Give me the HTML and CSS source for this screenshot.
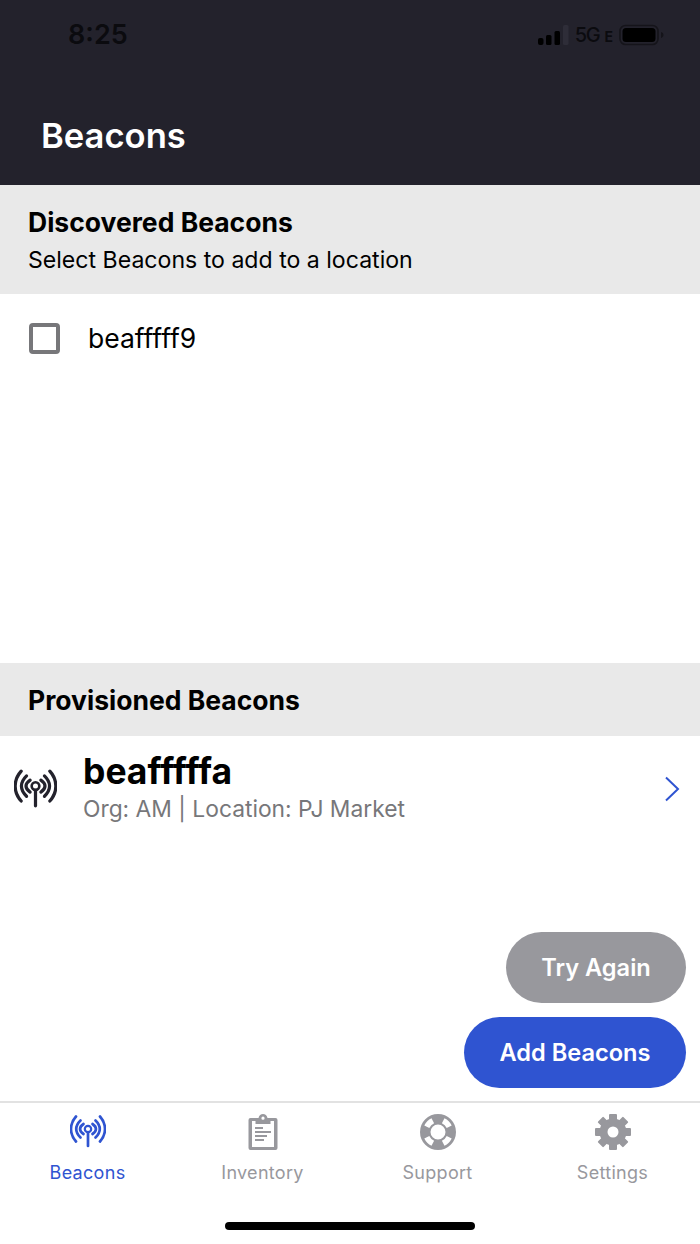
FILE: index.html
```html
<!DOCTYPE html>
<html lang="en">
<head>
<meta charset="utf-8">
<title>Beacons</title>
<link rel="stylesheet" href="styles.css">
</head>
<body>
<div class="screen">
  <header class="header">
    <div class="status">
      <span class="time">8:25</span>
      <div class="status-icons">
        <svg class="signal" width="31" height="20" viewBox="0 0 31 20"><rect x="0" y="13" width="5.500" height="7" rx="2" fill="#000"/><rect x="8" y="10" width="5.500" height="10" rx="1.500" fill="#000"/><rect x="16.500" y="6" width="5.500" height="14" rx="1.500" fill="#000"/><rect x="25" y="0" width="5.500" height="20" rx="1.500" fill="#2e2d38"/></svg>
        <span class="net">5G<span class="net-e">E</span></span>
        <svg class="battery" width="46" height="22" viewBox="0 0 46 22"><rect x="1" y="1.500" width="38" height="19" rx="5.500" fill="none" stroke="#15141a" stroke-width="1.600"/><rect x="3.500" y="4" width="33" height="14" rx="3.500" fill="#000"/><path d="M42 8c1.600.4 2.500 1.600 2.500 3s-.9 2.600-2.500 3z" fill="#15141a"/></svg>
      </div>
    </div>
    <h1 class="title">Beacons</h1>
  </header>

  <section class="band band-discovered">
    <h2 class="band-title">Discovered Beacons</h2>
    <p class="band-sub">Select Beacons to add to a location</p>
  </section>
  <div class="discovered">
    <div class="check-row">
      <span class="checkbox"></span>
      <span class="check-label">beafffff9</span>
    </div>
  </div>

  <section class="band band-provisioned">
    <h2 class="band-title">Provisioned Beacons</h2>
  </section>
  <div class="provisioned">
    <div class="beacon-row">
      <svg class="beacon-icon" width="43" height="39" viewBox="0 1 36 32"><g fill="none" stroke="#23222c" stroke-width="2.700" stroke-linecap="round"><path d="M6 2.500C-.7 10 -.7 20 6 27.500"/><path d="M30 2.500C36.700 10 36.700 20 30 27.500"/><path d="M10.500 6.500C4.800 12 4.800 18 10.500 23.500"/><path d="M25.500 6.500C31.200 12 31.200 18 25.500 23.500"/><path d="M13.500 10C8.900 13 8.900 17 13.500 20"/><path d="M22.500 10C27.100 13 27.100 17 22.500 20"/><circle cx="18" cy="15" r="3.200" stroke-width="2.200"/><path d="M18 18.500V31.500"/></g></svg>
      <div class="beacon-text">
        <div class="beacon-name">beafffffa</div>
        <div class="beacon-meta">Org: AM | Location: PJ Market</div>
      </div>
      <svg class="chevron" width="16" height="26" viewBox="0 0 16 26"><path d="M2 1.500 14 13 2 24.500" fill="none" stroke="#2f54d1" stroke-width="2"/></svg>
    </div>
    <div class="actions">
      <button class="btn btn-gray">Try Again</button>
      <button class="btn btn-blue">Add Beacons</button>
    </div>
  </div>

  <nav class="tabs">
    <div class="tab tab-active">
      <svg class="tab-icon" width="36" height="36" viewBox="0 0 36 36"><g fill="none" stroke="currentColor" stroke-width="2.700" stroke-linecap="round"><path d="M6 2.500C-.7 10 -.7 20 6 27.500"/><path d="M30 2.500C36.700 10 36.700 20 30 27.500"/><path d="M10.500 6.500C4.800 12 4.800 18 10.500 23.500"/><path d="M25.500 6.500C31.200 12 31.200 18 25.500 23.500"/><path d="M13.500 10C8.900 13 8.900 17 13.500 20"/><path d="M22.500 10C27.100 13 27.100 17 22.500 20"/><circle cx="18" cy="15" r="3.200" stroke-width="2.200"/><path d="M18 18.500V32"/></g></svg>
      <span>Beacons</span>
    </div>
    <div class="tab">
      <svg class="tab-icon" width="36" height="36" viewBox="0 0 36 36"><path fill="currentColor" fill-rule="evenodd" d="M5.500 4h8C14 1.500 15.800 0 18 0s4 1.500 4.500 4h8a2 2 0 0 1 2 2v28a2 2 0 0 1-2 2h-25a2 2 0 0 1-2-2V6a2 2 0 0 1 2-2zm1.500 3v26h22V7h-3.500v3h-15V7zM18 2.600a1.600 1.600 0 1 0 0 3.200 1.600 1.600 0 0 0 0-3.200z"/><g fill="currentColor"><rect x="10" y="13" width="8" height="2"/><rect x="10" y="17" width="16" height="2"/><rect x="10" y="21" width="12" height="2"/><rect x="10" y="25" width="9" height="2"/></g></svg>
      <span>Inventory</span>
    </div>
    <div class="tab">
      <svg class="tab-icon" width="36" height="36" viewBox="0 0 36 36"><path fill="currentColor" fill-rule="evenodd" d="M18 0a18 18 0 1 1 0 36 18 18 0 0 1 0-36zm0 10.500a7.500 7.500 0 1 0 0 15 7.500 7.500 0 0 0 0-15zM11.500 4.300a15.200 15.200 0 0 0-7.200 7.200l5 2.600a10 10 0 0 1 4.800-4.800zm13 0-2.600 5a10 10 0 0 1 4.800 4.800l5-2.600a15.200 15.200 0 0 0-7.200-7.200zM4.300 24.500a15.200 15.200 0 0 0 7.200 7.200l2.600-5a10 10 0 0 1-4.800-4.800zm27.400 0-5-2.600a10 10 0 0 1-4.800 4.800l2.600 5a15.200 15.200 0 0 0 7.200-7.200z"/></svg>
      <span>Support</span>
    </div>
    <div class="tab">
      <svg class="tab-icon" width="36" height="36" viewBox="0 0 36 36"><g fill="currentColor"><circle cx="18" cy="18" r="13.500"/><rect x="14" y="0" width="8" height="36" rx="1"/><rect x="14" y="0" width="8" height="36" rx="1" transform="rotate(45 18 18)"/><rect x="14" y="0" width="8" height="36" rx="1" transform="rotate(90 18 18)"/><rect x="14" y="0" width="8" height="36" rx="1" transform="rotate(135 18 18)"/></g><circle cx="18" cy="18" r="5.500" fill="#fff"/></svg>
      <span>Settings</span>
    </div>
  </nav>
  <div class="home-area"><div class="home-bar"></div></div>
</div>
</body>
</html>
```
FILE: styles.css
```css
* { box-sizing: border-box; }
html, body { margin: 0; padding: 0; }
body { background: #fff; font-family: Inter, "Noto Sans", sans-serif; color: #000; }
.screen { width: 700px; height: 1244px; display: flex; flex-direction: column; overflow: hidden; }

.header { height: 185px; background: #23222c; padding: 0 0 0 41px; display: flex; flex-direction: column; }
.status { height: 68px; display: flex; align-items: center; justify-content: space-between; padding: 2px 35px 0 27px; }
.time { font-size: 27px; font-weight: 600; color: #0b0b0f; line-height: 34px; }
.status-icons { display: flex; align-items: center; gap: 6px; }
.net { font-size: 20px; font-weight: 500; color: #0b0b0f; line-height: 24px; letter-spacing: -1.300px; display: flex; align-items: flex-end; }
.net-e { font-size: 14px; font-weight: 700; margin-left: 5px; line-height: 21px; letter-spacing: 0; }
.title { margin: 47px 0 0; font-size: 34.600px; line-height: 40px; font-weight: 600; color: #fff; }

.band { background: #e9e9e9; padding-left: 28px; }
.band-discovered { height: 109px; padding-top: 21px; }
.band-provisioned { height: 73px; padding-top: 21px; }
.band-title { margin: 0; font-size: 26.500px; line-height: 32px; font-weight: 700; }
.band-sub { margin: 6px 0 0; font-size: 23.100px; line-height: 32px; }

.discovered { height: 369px; padding: 29px 0 0 29px; }
.check-row { display: flex; align-items: center; gap: 28px; }
.checkbox { width: 31px; height: 31px; border: 4px solid #77777a; border-radius: 4px; }
.check-label { font-size: 26.500px; line-height: 31px; }

.provisioned { height: 365px; display: flex; flex-direction: column; }
.beacon-row { display: flex; align-items: center; padding: 12px 20px 0 14px; height: 88px; }
.beacon-icon { flex: none; margin-top: 5px; }
.beacon-text { flex: 1; margin-left: 26px; }
.beacon-name { font-size: 35.500px; line-height: 44px; font-weight: 700; }
.beacon-meta { font-size: 22.800px; line-height: 29px; color: #77777a; }
.chevron { flex: none; margin-top: 6px; }
.actions { display: flex; flex-direction: column; align-items: flex-end; gap: 14px; padding: 108px 14px 0 0; }
.btn { border: 0; height: 71px; border-radius: 36px; color: #fff; font: 600 23.600px/30px Inter, sans-serif; }
.btn-gray { width: 180px; background: #98989d; }
.btn-blue { width: 222px; background: #2f54d1; }

.tabs { height: 100px; border-top: 2px solid #e2e2e2; display: grid; grid-template-columns: repeat(4, 1fr); }
.tab { display: flex; flex-direction: column; align-items: center; color: #98989d; font-size: 18px; letter-spacing: 0.3px; line-height: 24px; padding-top: 11px; }
.tab-active { color: #2f54d1; }
.tab-icon { margin-bottom: 11px; }

.home-area { flex: 1; display: flex; justify-content: center; padding-top: 21px; }
.home-bar { width: 250px; height: 8px; border-radius: 4px; background: #000; }
```
